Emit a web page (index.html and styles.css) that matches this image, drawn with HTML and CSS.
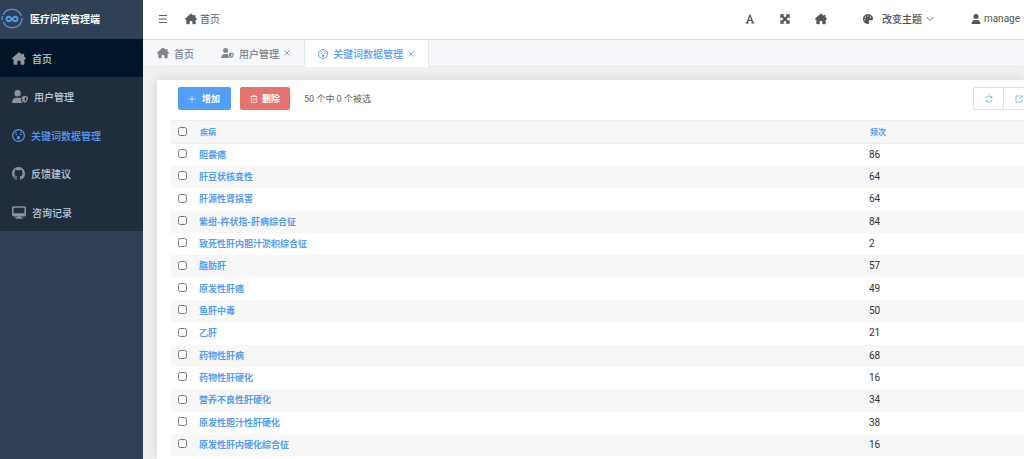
FILE: index.html
```html
<!DOCTYPE html>
<html lang="zh-CN">
<head>
<meta charset="utf-8">
<meta name="viewport" content="width=device-width, initial-scale=1">
<title>医疗问答管理端</title>
<link rel="stylesheet" href="styles.css">
</head>
<body>
<svg class="sprite" aria-hidden="true">
  <symbol id="house" viewBox="0 0 576 512"><path fill="currentColor" d="M575.8 255.5c0 18-15 32.1-32 32.1h-32l.7 160.2c0 2.7-.2 5.4-.5 8.1V472c0 22.1-17.9 40-40 40H456c-1.1 0-2.2 0-3.3-.1c-1.4 .1-2.8 .1-4.2 .1H392c-22.1 0-40-17.9-40-40V384c0-17.7-14.3-32-32-32H256c-17.7 0-32 14.3-32 32v88c0 22.1-17.9 40-40 40H128.100c-1.500 0-3-.1-4.500-.2c-1.200 .1-2.400 .2-3.600 .2H104c-22.100 0-40-17.900-40-40V287.600H32c-18 0-32-14-32-32.100c0-9 3-17 10-24L266.400 8c7-7 15-8 22-8s15 2 21 7L420 103V84c0-11 9-20 20-20h40c11 0 20 9 20 20v91l64.800 56.500c8 7 12 15 11 24z"/></symbol>
  <symbol id="user-shield" viewBox="0 0 640 512"><path fill="currentColor" d="M224 256a128 128 0 1 0 0-256a128 128 0 1 0 0 256zM178 304C80 304 0 384 0 482c0 17 13 30 30 30h388c4 0 8-1 12-3c-50-40-78-105-78-173c0-8 2-16 5-23c-28-6-56-9-87-9z"/><path fill="currentColor" fill-rule="evenodd" d="M512 226c4 0 8 1 12 3l96 38c12 5 20 16 20 29c0 84-30 170-116 214c-8 3-16 3-24 0c-86-44-116-130-116-214c0-13 8-24 20-29l96-38c4-2 8-3 12-3zm0 59v171c50-28 72-84 74-142z"/></symbol>
  <symbol id="face" viewBox="0 0 16 16"><g fill="none" stroke="currentColor"><circle cx="8" cy="8" r="7.200" stroke-width="1.500"/><path d="M4 5l1.500-1M12 5l-1.500-1" stroke-width="1" stroke-linecap="round"/></g><g fill="currentColor"><circle cx="5.300" cy="6.800" r="1"/><circle cx="10.700" cy="6.800" r="1"/><ellipse cx="8" cy="10.800" rx="1.900" ry="2.100"/></g></symbol>
  <symbol id="github" viewBox="0 0 16 16"><path fill="currentColor" d="M8 0C3.58 0 0 3.58 0 8c0 3.54 2.29 6.53 5.47 7.59.4.07.55-.17.55-.38 0-.19-.01-.82-.01-1.49-2.01.37-2.53-.49-2.69-.94-.09-.23-.48-.94-.82-1.13-.28-.15-.68-.52-.01-.53.63-.01 1.08.58 1.23.82.72 1.21 1.87.87 2.33.66.07-.52.28-.87.51-1.07-1.78-.2-3.64-.89-3.64-3.95 0-.87.31-1.59.82-2.15-.08-.2-.36-1.02.08-2.12 0 0 .67-.21 2.2.82.64-.18 1.32-.27 2-.27s1.36.09 2 .27c1.53-1.04 2.2-.82 2.2-.82.44 1.1.16 1.92.08 2.12.51.56.82 1.27.82 2.15 0 3.07-1.87 3.75-3.65 3.95.29.25.54.73.54 1.48 0 1.07-.01 1.93-.01 2.2 0 .21.15.46.55.38A8.01 8.01 0 0 0 16 8c0-4.42-3.58-8-8-8z"/></symbol>
  <symbol id="desktop" viewBox="0 0 576 512"><path fill="currentColor" fill-rule="evenodd" d="M64 0C29 0 0 29 0 64v288c0 35 29 64 64 64h176l-11 32h-69c-18 0-32 14-32 32s14 32 32 32h256c18 0 32-14 32-32s-14-32-32-32h-69l-11-32h176c35 0 64-29 64-64V64c0-35-29-64-64-64zM64 64h448v224H64z"/></symbol>
  <symbol id="font" viewBox="0 0 16 16"><path fill="currentColor" fill-rule="evenodd" d="M7 1h2l4.500 12H15v2h-5v-2h1.300l-.8-2h-5l-.8 2H6v2H1v-2h1.500zM8 4L6.200 9h3.600z"/></symbol>
  <symbol id="expand" viewBox="0 0 16 16"><path fill="currentColor" d="M.5.5H7L5.300 2.900 8 5.500l2.700-2.600L9 .5h6.500V7l-2.400-1.700L10.500 8l2.600 2.700L15.500 9v6.500H9l1.700-2.400L8 10.500l-2.700 2.600L7 15.500H.5V9l2.400 1.700L5.500 8 2.900 5.300.5 7z"/></symbol>
  <symbol id="palette" viewBox="0 0 512 512"><path fill="currentColor" fill-rule="evenodd" d="M512 256c0 1 0 2 0 3c0 36-34 61-70 61H344c-27 0-48 21-48 48c0 3 0 7 1 10c2 10 6 20 11 30c6 14 12 27 12 42c0 32-22 61-54 62c-3 0-7 0-10 0C115 512 0 397 0 256S115 0 256 0s256 115 256 256zM128 288a32 32 0 1 0-64 0a32 32 0 1 0 64 0zm0-96a32 32 0 1 0 0-64a32 32 0 1 0 0 64zM288 96a32 32 0 1 0-64 0a32 32 0 1 0 64 0zm96 96a32 32 0 1 0 0-64a32 32 0 1 0 0 64z"/></symbol>
  <symbol id="user" viewBox="0 0 448 512"><path fill="currentColor" d="M224 256a128 128 0 1 0 0-256a128 128 0 1 0 0 256zM178 304C80 304 0 384 0 482c0 17 13 30 30 30h388c17 0 30-13 30-30c0-98-80-178-178-178z"/></symbol>
  <symbol id="close" viewBox="0 0 8 8"><path fill="none" stroke="currentColor" stroke-width=".8" d="M1.500 1.500l5 5m0-5l-5 5"/></symbol>
</svg>
<div class="app">
  <aside class="sidebar">
    <div class="brand">
      <svg class="logo" viewBox="0 0 22 22" aria-hidden="true"><g fill="none" stroke="#5695d6"><path d="M2 7a10 10 0 0 1 18.500 1M20.700 13a10 10 0 0 1-18.500 1M1 12a10 10 0 0 1 .5-4M21 10a10 10 0 0 1-.3 3" stroke-width="1.300"/><path d="M11 11c-2-2.800-5.500-3.200-5.500 0s3.500 2.800 5.500 0 5.500-3.200 5.500 0-3.500 2.800-5.500 0z" stroke="#4ba3f0" stroke-width="1.800"/></g></svg>
      <h1>医疗问答管理端</h1>
    </div>
    <nav class="menu">
      <a class="menu-item home" href="#"><svg class="icon wide"><use href="#house"/></svg>首页</a>
      <a class="menu-item" href="#"><svg class="icon shield"><use href="#user-shield"/></svg>用户管理</a>
      <a class="menu-item active" href="#"><svg class="icon"><use href="#face"/></svg>关键词数据管理</a>
      <a class="menu-item" href="#"><svg class="icon"><use href="#github"/></svg>反馈建议</a>
      <a class="menu-item" href="#"><svg class="icon wide"><use href="#desktop"/></svg>咨询记录</a>
    </nav>
  </aside>
  <div class="page">
    <header class="topbar">
      <button class="plain" aria-label="折叠菜单"><svg class="icon small" viewBox="0 0 12 12"><path d="M2 2.500h8M2 6h8M2 9.500h8" stroke="currentColor" stroke-width="1.200"/></svg></button>
      <a class="crumb" href="#"><svg class="icon small"><use href="#house"/></svg>首页</a>
      <div class="tools">
        <button class="plain" aria-label="字体"><svg class="icon tool"><use href="#font"/></svg></button>
        <button class="plain" aria-label="全屏"><svg class="icon tool"><use href="#expand"/></svg></button>
        <a class="plain" href="#" aria-label="主页"><svg class="icon small"><use href="#house"/></svg></a>
        <button class="plain theme"><svg class="icon tool"><use href="#palette"/></svg><span>改变主题</span><svg class="icon chevron" viewBox="0 0 8 8"><path d="M.5 2L4 5.500 7.500 2" fill="none" stroke="currentColor" stroke-width=".8"/></svg></button>
        <button class="plain account"><svg class="icon tool"><use href="#user"/></svg>manage</button>
      </div>
    </header>
    <nav class="tabs">
      <a class="tab" href="#"><svg class="icon small"><use href="#house"/></svg>首页</a>
      <div class="tab"><svg class="icon tab-shield"><use href="#user-shield"/></svg><a href="#">用户管理</a><button class="plain" aria-label="关闭用户管理"><svg class="icon x"><use href="#close"/></svg></button></div>
      <div class="tab current"><svg class="icon tool"><use href="#face"/></svg><a href="#">关键词数据管理</a><button class="plain" aria-label="关闭关键词数据管理"><svg class="icon x"><use href="#close"/></svg></button></div>
    </nav>
    <main class="content">
      <section class="panel">
        <div class="toolbar">
          <button class="btn add"><svg class="icon x" viewBox="0 0 8 8"><path d="M4 .5v7M.5 4h7" stroke="currentColor" stroke-width=".6"/></svg>增加</button>
          <button class="btn delete"><svg class="icon x" viewBox="0 0 8 8"><path d="M.5 1.500h7M2.800 1.500v-1h2.400v1M1.300 1.500v6h5.400v-6M3.200 3.200v2.600M4.800 3.200v2.600" fill="none" stroke="currentColor" stroke-width=".6"/></svg>删除</button>
          <span class="count">50 个中 0 个被选</span>
          <div class="group">
            <button aria-label="刷新"><svg class="icon x" viewBox="0 0 8 8"><path d="M1 3.500a3 3 0 0 1 5.500-1.200M7 4.500a3 3 0 0 1-5.500 1.200M6.800 1v1.500H5.500M1.200 7V5.500h1.300" fill="none" stroke="currentColor" stroke-width=".7"/></svg></button>
            <button aria-label="导出"><svg class="icon x" viewBox="0 0 8 8"><path d="M4.500 1H1v6h6V3.800M3.800 4.200L7 1M5.500.8h1.700v1.700" fill="none" stroke="currentColor" stroke-width=".7"/></svg></button>
          </div>
        </div>
        <table class="data">
          <thead><tr><th class="pick"><input type="checkbox" aria-label="全选"></th><th><a href="#">疾病</a></th><th class="num"><a href="#">频次</a></th></tr></thead>
          <tbody>
            <tr><td class="pick"><input type="checkbox" aria-label="胆囊癌"></td><td><a href="#">胆囊癌</a></td><td>86</td></tr>
            <tr><td class="pick"><input type="checkbox" aria-label="肝豆状核变性"></td><td><a href="#">肝豆状核变性</a></td><td>64</td></tr>
            <tr><td class="pick"><input type="checkbox" aria-label="肝源性肾损害"></td><td><a href="#">肝源性肾损害</a></td><td>64</td></tr>
            <tr><td class="pick"><input type="checkbox" aria-label="紫绀-杵状指-肝病综合征"></td><td><a href="#">紫绀-杵状指-肝病综合征</a></td><td>84</td></tr>
            <tr><td class="pick"><input type="checkbox" aria-label="致死性肝内胆汁淤积综合征"></td><td><a href="#">致死性肝内胆汁淤积综合征</a></td><td>2</td></tr>
            <tr><td class="pick"><input type="checkbox" aria-label="脂肪肝"></td><td><a href="#">脂肪肝</a></td><td>57</td></tr>
            <tr><td class="pick"><input type="checkbox" aria-label="原发性肝癌"></td><td><a href="#">原发性肝癌</a></td><td>49</td></tr>
            <tr><td class="pick"><input type="checkbox" aria-label="鱼肝中毒"></td><td><a href="#">鱼肝中毒</a></td><td>50</td></tr>
            <tr><td class="pick"><input type="checkbox" aria-label="乙肝"></td><td><a href="#">乙肝</a></td><td>21</td></tr>
            <tr><td class="pick"><input type="checkbox" aria-label="药物性肝病"></td><td><a href="#">药物性肝病</a></td><td>68</td></tr>
            <tr><td class="pick"><input type="checkbox" aria-label="药物性肝硬化"></td><td><a href="#">药物性肝硬化</a></td><td>16</td></tr>
            <tr><td class="pick"><input type="checkbox" aria-label="营养不良性肝硬化"></td><td><a href="#">营养不良性肝硬化</a></td><td>34</td></tr>
            <tr><td class="pick"><input type="checkbox" aria-label="原发性胆汁性肝硬化"></td><td><a href="#">原发性胆汁性肝硬化</a></td><td>38</td></tr>
            <tr><td class="pick"><input type="checkbox" aria-label="原发性肝内硬化综合征"></td><td><a href="#">原发性肝内硬化综合征</a></td><td>16</td></tr>
          </tbody>
        </table>
      </section>
    </main>
  </div>
</div>
</body>
</html>
```
FILE: styles.css
```css
* { box-sizing: border-box; }
body {
  margin: 0;
  overflow: hidden;
  font-family: Roboto, "Noto Sans CJK SC", sans-serif;
  font-size: 10px;
  color: #303133;
}
a { color: inherit; text-decoration: none; }
button { font: inherit; color: inherit; margin: 0; cursor: pointer; }
.sprite { display: none; }
.icon { width: 13px; height: 13px; flex: none; display: block; }
.icon.wide { width: 14px; }
.icon.shield { width: 16px; }
.icon.small { width: 12px; height: 12px; }
.icon.tool { width: 10px; height: 10px; }
.icon.tab-shield { width: 13px; height: 10px; }
.icon.x, .icon.chevron { width: 8px; height: 8px; }

.app { display: flex; min-height: 100vh; }
.sidebar { flex: 0 0 143px; background: #304156; }
.brand { display: flex; align-items: center; gap: 7px; height: 39px; padding: 0 0 2px 1px; color: #fff; }
.brand h1 { margin: 0; font-size: 10px; font-weight: 700; }
.logo { width: 22px; height: 22px; }
.menu { background: #1f2d3d; color: #bfcbd9; }
.menu-item { display: flex; align-items: center; gap: 6px; height: 38px; padding-left: 12px; font-weight: 500; }
.menu-item:nth-child(even) { height: 39px; }
.menu-item .icon { color: #909399; }
.menu-item.home { background: #001528; }
.menu-item.active, .menu-item.active .icon { color: #5a9cf8; }

.page { flex: 1; min-width: 0; display: flex; flex-direction: column; background: #f0f0f0; }
.plain { display: flex; align-items: center; padding: 0; border: 0; background: none; }
.topbar { display: flex; align-items: center; height: 40px; padding: 0 4px 2px 14px; background: #fff; border-bottom: 1px solid #d8dce5; color: #5a5e66; }
.crumb { display: flex; align-items: center; gap: 3px; margin-left: 16px; }
.tools { display: flex; align-items: center; gap: 25px; margin-left: auto; color: #555; }
.theme { gap: 9px; margin-left: 11px; font-weight: 500; }
.theme .chevron { margin-left: -5px; }
.account { gap: 3px; margin-left: 12px; }

.tabs { display: flex; height: 27px; background: #f5f7fa; border-bottom: 1px solid #e4e7ed; color: #808388; }
.tab { display: flex; align-items: center; gap: 5px; padding: 0 13px 0 14px; font-weight: 500; }
.tab .plain { margin-left: -1px; }
.tab.current { padding-left: 13px; background: #fff; color: #5a9cf8; border: solid #e4e7ed; border-width: 0 1px; margin-bottom: -1px; }

.content { flex: 1; padding: 13px 0 0 14px; }
.panel { min-height: 100%; padding: 7px 0 0 14px; background: #fff; box-shadow: 0 0 12px rgba(0, 0, 0, .12); }
.toolbar { display: flex; align-items: center; gap: 9px; padding-left: 7px; margin-bottom: 10px; }
.btn { display: flex; align-items: center; justify-content: center; gap: 6px; height: 23px; padding: 0 10px; border: 0; border-radius: 2px; color: #fff; font-size: 9px; font-weight: 700; }
.add { background: #539ef8; padding: 0 11px 0 10px; }
.delete { background: #e47470; gap: 4px; }
.count { margin-left: 5px; color: #606266; font-size: 9px; }
.group { display: flex; margin: 0 -10px 0 auto; border: 1px solid #dcdfe6; border-radius: 2px; background: #fff; color: #5a9cf8; }
.group button { display: grid; place-items: center; width: 29px; height: 21px; padding: 0; border: 0; background: none; }
.group button + button { width: 30px; border-left: 1px solid #dcdfe6; }

.data { width: 100%; border-collapse: collapse; table-layout: fixed; line-height: 14px; }
.data th, .data td { padding: 0 0 0 3px; text-align: left; height: 22px; }
.data th { height: 23px; padding-left: 4px; background: #f6f6f6; border-top: 1px solid #eee; border-bottom: 1px solid #eee; }
.data tr:nth-child(3n) td { height: 23px; }
.data tbody tr:nth-child(even) { background: #f7f7f7; }
.data a { color: #539ef0; font-size: 9px; font-weight: 700; }
.data th a { font-size: 8px; }
.data .pick { width: 25px; padding-left: 7px; }
.data .num { width: 158px; }
.data input { display: block; width: 9px; height: 9px; margin: 0 0 2px; }
```
